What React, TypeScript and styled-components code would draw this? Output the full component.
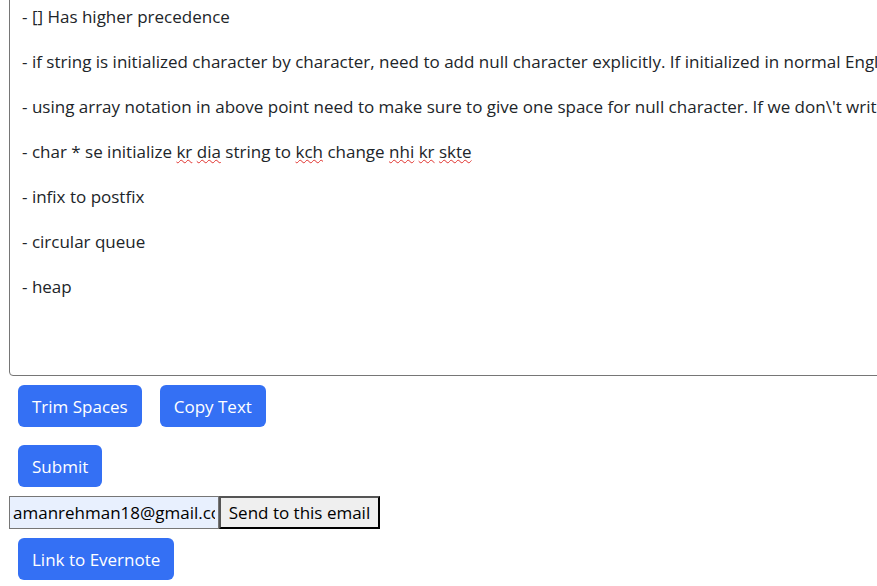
import React from "react";
import styled, { createGlobalStyle } from "styled-components";

const Global = createGlobalStyle`
  html, body { margin: 0; padding: 0; overflow: hidden; background: #fff; }
  body { font-family: "Open Sans", "Noto Sans", sans-serif; color: #212529; }
`;

const Page = styled.div`
  width: 877px;
  height: 586px;
  overflow: hidden;
  padding: 0 0 0 9px;
  box-sizing: border-box;
`;

const Editor = styled.div`
  width: 1100px;
  height: 386px;
  margin-top: -10px;
  box-sizing: border-box;
  border: 1px solid #767676;
  border-radius: 4px;
  padding: 15px 12px 0 12px;
  font-size: 17px;
  line-height: 22.5px;
  white-space: pre;
  overflow: hidden;
  color: #212529;
`;

const Line = styled.div`
  height: 45px;
`;

const Miss = styled.span`
  text-decoration: underline wavy #e0322e;
  text-decoration-thickness: 1px;
  text-underline-offset: 1px;
`;

const Row = styled.div`
  display: flex;
  align-items: stretch;
`;

const Btn = styled.button`
  margin: 9px;
  height: 42px;
  padding: 0 14px;
  background: #3470f4;
  color: #fff;
  border: none;
  border-radius: 6px;
  font-family: "Open Sans", "Noto Sans", sans-serif;
  font-size: 17px;
`;

const EmailRow = styled.div`
  display: flex;
  height: 33px;
`;

const Email = styled.input`
  width: 210px;
  height: 33px;
  box-sizing: border-box;
  border: 1px solid #767676;
  background: #e8f0fe;
  color: #000;
  font-family: "Open Sans", "Noto Sans", sans-serif;
  font-size: 17px;
  padding: 0 3px;
  margin: 0;
  outline: none;
`;

const SendBtn = styled.button`
  height: 33px;
  width: 161px;
  box-sizing: border-box;
  margin: 0;
  padding: 0 6px;
  border: 2px solid;
  border-color: #555 #000 #000 #555;
  background: #efefef;
  color: #000;
  font-family: "Open Sans", "Noto Sans", sans-serif;
  font-size: 17px;
`;

export default function App() {
  return (
    <>
      <Global />
      <Page>
        <Editor>
          <Line>- [] Has higher precedence</Line>
          <Line>
            - if string is initialized character by character, need to add null character explicitly. If initialized in normal English sentence it adds automatically.
          </Line>
          <Line>
            - using array notation in above point need to make sure to give one space for null character. If we don\'t write size it works.
          </Line>
          <Line>
            - char * se initialize <Miss>kr</Miss> <Miss>dia</Miss> string to <Miss>kch</Miss> change <Miss>nhi</Miss> <Miss>kr</Miss> <Miss>skte</Miss>
          </Line>
          <Line>- infix to postfix</Line>
          <Line>- circular queue</Line>
          <Line>- heap</Line>
        </Editor>
        <Row>
          <Btn>Trim Spaces</Btn>
          <Btn>Copy Text</Btn>
        </Row>
        <Row>
          <Btn>Submit</Btn>
        </Row>
        <EmailRow>
          <Email defaultValue="amanrehman18@gmail.com" />
          <SendBtn>Send to this email</SendBtn>
        </EmailRow>
        <Row>
          <Btn>Link to Evernote</Btn>
        </Row>
      </Page>
    </>
  );
}
